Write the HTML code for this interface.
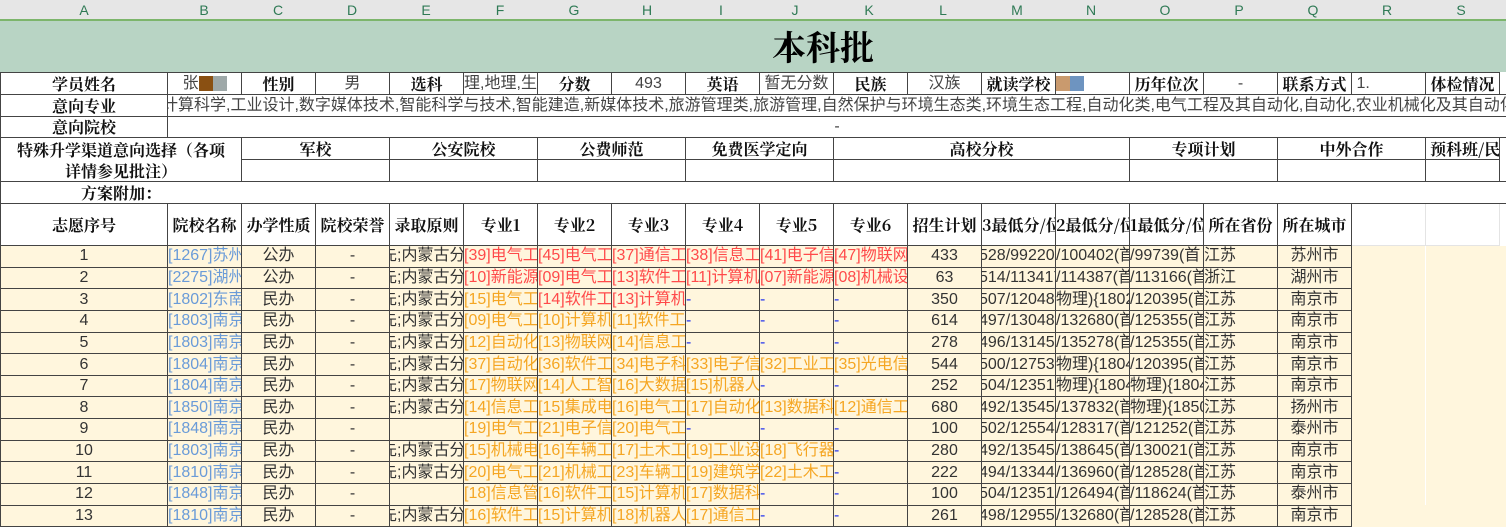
<!DOCTYPE html>
<html><head><meta charset="utf-8"><style>
*{margin:0;padding:0;box-sizing:border-box}
body{width:1506px;height:518px;overflow:hidden;background:#fff;font-family:"Liberation Sans","Noto Sans CJK SC",sans-serif;position:relative}
#hdr{position:absolute;left:0;top:0;width:1506px;height:21px;background:#e6e6e6;border-bottom:2px solid #7cb56b}
#hdr span{position:absolute;top:2px;width:74px;text-align:center;font-size:14px;color:#2f7a55}
#title{position:absolute;left:0;top:21px;width:1506px;height:51px;background:#b8d4c4;text-align:center;font:bold 34px/50px "Noto Serif CJK SC","Noto Sans CJK SC",serif;color:#000;padding-left:140px}
table{position:absolute;left:0;top:72px;border-collapse:collapse;table-layout:fixed;width:1506px}
td{border:1px solid #444;overflow:hidden;white-space:nowrap;text-align:center;font-size:16px;color:#444;padding:0;line-height:18px}
.b{font-family:"Noto Serif CJK SC","Noto Sans CJK SC",serif;font-weight:bold;color:#111;font-size:16px}
.l{text-align:left}
.nb{border:none}
.d td{background:#fff6dd;height:21.65px;color:#333}
.d td.nb{border:none}
.d td.k{color:#6a9bd8;text-align:left}
.d td.r{color:#ff4a4a;text-align:left}
.d td.o{color:#f5a623;text-align:left}
.d td.q{color:#2233ee;text-align:left}
.e span{margin-left:-9px}
.m span{margin-left:-3px}
.m{text-align:left}
</style></head><body>
<div id="hdr">
<span style="left:47px">A</span><span style="left:167px">B</span><span style="left:241px">C</span><span style="left:315px">D</span><span style="left:389px">E</span><span style="left:463px">F</span><span style="left:537px">G</span><span style="left:610px">H</span><span style="left:684px">I</span><span style="left:758px">J</span><span style="left:832px">K</span><span style="left:906px">L</span><span style="left:980px">M</span><span style="left:1054px">N</span><span style="left:1128px">O</span><span style="left:1202px">P</span><span style="left:1276px">Q</span><span style="left:1350px">R</span><span style="left:1424px">S</span>
</div>
<div id="title">本科批</div>
<table>
<colgroup><col style="width:167px"><col span="18" style="width:74px"><col style="width:7px"></colgroup>
<tr style="height:22px"><td class="b">学员姓名</td><td>张<span style="display:inline-block;width:14px;height:15px;background:#8a5012;vertical-align:middle"></span><span style="display:inline-block;width:14px;height:15px;background:#9ea8a8;vertical-align:middle"></span></td><td class="b">性别</td><td>男</td><td class="b">选科</td><td>理,地理,生</td><td class="b">分数</td><td>493</td><td class="b">英语</td><td>暂无分数</td><td class="b">民族</td><td>汉族</td><td class="b">就读学校</td><td class="l"><span style="display:inline-block;width:14px;height:15px;background:#c99a6e;vertical-align:middle"></span><span style="display:inline-block;width:14px;height:15px;background:#6e94c0;vertical-align:middle"></span></td><td class="b">历年位次</td><td>-</td><td class="b">联系方式</td><td class="l">&nbsp;1.</td><td class="b">体检情况</td><td class="nb"></td></tr>
<tr style="height:22px"><td class="b">意向专业</td><td colspan="19" class="l" style="text-indent:-6px">计算科学,工业设计,数字媒体技术,智能科学与技术,智能建造,新媒体技术,旅游管理类,旅游管理,自然保护与环境生态类,环境生态工程,自动化类,电气工程及其自动化,自动化,农业机械化及其自动化</td></tr>
<tr style="height:21px"><td class="b">意向院校</td><td colspan="19">-</td></tr>
<tr style="height:22px"><td colspan="2" rowspan="2" class="b" style="line-height:21px">特殊升学渠道意向选择（各项<br>详情参见批注）</td><td colspan="2" class="b">军校</td><td colspan="2" class="b">公安院校</td><td colspan="2" class="b">公费师范</td><td colspan="2" class="b">免费医学定向</td><td colspan="4" class="b">高校分校</td><td colspan="2" class="b">专项计划</td><td colspan="2" class="b">中外合作</td><td class="b l">&nbsp;预科班/民</td><td class="nb"></td></tr>
<tr style="height:22px"><td colspan="2"></td><td colspan="2"></td><td colspan="2"></td><td colspan="2"></td><td colspan="4"></td><td colspan="2"></td><td colspan="2"></td><td></td><td class="nb"></td></tr>
<tr style="height:22px"><td colspan="2" class="b" style="border-right:none;text-align:left;padding-left:80px">方案附加：</td><td colspan="18" style="border-left:none"></td></tr>
<tr style="height:42px"><td class="b">志愿序号</td><td class="b">院校名称</td><td class="b">办学性质</td><td class="b">院校荣誉</td><td class="b">录取原则</td><td class="b">专业1</td><td class="b">专业2</td><td class="b">专业3</td><td class="b">专业4</td><td class="b">专业5</td><td class="b">专业6</td><td class="b">招生计划</td><td class="b m">3最低分/位</td><td class="b m">2最低分/位</td><td class="b m">1最低分/位</td><td class="b">所在省份</td><td class="b">所在城市</td><td style="border-color:#e4e4e4"></td><td style="border-color:#e4e4e4"></td><td class="nb"></td></tr>
</table>
<table style="top:245px" class="d">
<colgroup><col style="width:167px"><col span="18" style="width:74px"><col style="width:7px"></colgroup>
<tr><td>1</td><td class="k">[1267]苏州</td><td>公办</td><td>-</td><td class="e l"><span>先;内蒙古分</span></td><td class="r">[39]电气工</td><td class="r">[45]电气工</td><td class="r">[37]通信工</td><td class="r">[38]信息工</td><td class="r">[41]电子信</td><td class="r">[47]物联网</td><td>433</td><td class="m"><span>528/99220</span></td><td class="l">/100402(首</td><td class="l">/99739(首</td><td class="l">江苏</td><td>苏州市</td><td class="nb"></td><td class="nb"></td><td class="nb"></td></tr>
<tr><td>2</td><td class="k">[2275]湖州</td><td>公办</td><td>-</td><td class="e l"><span>先;内蒙古分</span></td><td class="r">[10]新能源</td><td class="r">[09]电气工</td><td class="r">[13]软件工</td><td class="r">[11]计算机</td><td class="r">[07]新能源</td><td class="r">[08]机械设</td><td>63</td><td class="m"><span>514/113417</span></td><td class="l">/114387(首</td><td class="l">/113166(首</td><td class="l">浙江</td><td>湖州市</td><td class="nb"></td><td class="nb"></td><td class="nb"></td></tr>
<tr><td>3</td><td class="k">[1802]东南</td><td>民办</td><td>-</td><td class="e l"><span>先;内蒙古分</span></td><td class="o">[15]电气工</td><td class="r">[14]软件工</td><td class="r">[13]计算机</td><td class="q">-</td><td class="q">-</td><td class="q">-</td><td>350</td><td class="m"><span>507/120486</span></td><td class="l">物理){1802</td><td class="l">/120395(首</td><td class="l">江苏</td><td>南京市</td><td class="nb"></td><td class="nb"></td><td class="nb"></td></tr>
<tr><td>4</td><td class="k">[1803]南京</td><td>民办</td><td>-</td><td class="e l"><span>先;内蒙古分</span></td><td class="o">[09]电气工</td><td class="o">[10]计算机</td><td class="o">[11]软件工</td><td class="q">-</td><td class="q">-</td><td class="q">-</td><td>614</td><td class="m"><span>497/130487</span></td><td class="l">/132680(首</td><td class="l">/125355(首</td><td class="l">江苏</td><td>南京市</td><td class="nb"></td><td class="nb"></td><td class="nb"></td></tr>
<tr><td>5</td><td class="k">[1803]南京</td><td>民办</td><td>-</td><td class="e l"><span>先;内蒙古分</span></td><td class="o">[12]自动化</td><td class="o">[13]物联网</td><td class="o">[14]信息工</td><td class="q">-</td><td class="q">-</td><td class="q">-</td><td>278</td><td class="m"><span>496/131457</span></td><td class="l">/135278(首</td><td class="l">/125355(首</td><td class="l">江苏</td><td>南京市</td><td class="nb"></td><td class="nb"></td><td class="nb"></td></tr>
<tr><td>6</td><td class="k">[1804]南京</td><td>民办</td><td>-</td><td class="e l"><span>先;内蒙古分</span></td><td class="o">[37]自动化</td><td class="o">[36]软件工</td><td class="o">[34]电子科</td><td class="o">[33]电子信</td><td class="o">[32]工业工</td><td class="o">[35]光电信</td><td>544</td><td class="m"><span>500/127538</span></td><td class="l">物理){1804</td><td class="l">/120395(首</td><td class="l">江苏</td><td>南京市</td><td class="nb"></td><td class="nb"></td><td class="nb"></td></tr>
<tr><td>7</td><td class="k">[1804]南京</td><td>民办</td><td>-</td><td class="e l"><span>先;内蒙古分</span></td><td class="o">[17]物联网</td><td class="o">[14]人工智</td><td class="o">[16]大数据</td><td class="o">[15]机器人</td><td class="q">-</td><td class="q">-</td><td>252</td><td class="m"><span>504/123513</span></td><td class="l">物理){1804</td><td class="l">物理){1804</td><td class="l">江苏</td><td>南京市</td><td class="nb"></td><td class="nb"></td><td class="nb"></td></tr>
<tr><td>8</td><td class="k">[1850]南京</td><td>民办</td><td>-</td><td class="e l"><span>先;内蒙古分</span></td><td class="o">[14]信息工</td><td class="o">[15]集成电</td><td class="o">[16]电气工</td><td class="o">[17]自动化</td><td class="o">[13]数据科</td><td class="o">[12]通信工</td><td>680</td><td class="m"><span>492/135454</span></td><td class="l">/137832(首</td><td class="l">物理){1850</td><td class="l">江苏</td><td>扬州市</td><td class="nb"></td><td class="nb"></td><td class="nb"></td></tr>
<tr><td>9</td><td class="k">[1848]南京</td><td>民办</td><td>-</td><td></td><td class="o">[19]电气工</td><td class="o">[21]电子信</td><td class="o">[20]电气工</td><td class="q">-</td><td class="q">-</td><td class="q">-</td><td>100</td><td class="m"><span>502/125547</span></td><td class="l">/128317(首</td><td class="l">/121252(首</td><td class="l">江苏</td><td>泰州市</td><td class="nb"></td><td class="nb"></td><td class="nb"></td></tr>
<tr><td>10</td><td class="k">[1803]南京</td><td>民办</td><td>-</td><td class="e l"><span>先;内蒙古分</span></td><td class="o">[15]机械电</td><td class="o">[16]车辆工</td><td class="o">[17]土木工</td><td class="o">[19]工业设</td><td class="o">[18]飞行器</td><td class="q">-</td><td>280</td><td class="m"><span>492/135454</span></td><td class="l">/138645(首</td><td class="l">/130021(首</td><td class="l">江苏</td><td>南京市</td><td class="nb"></td><td class="nb"></td><td class="nb"></td></tr>
<tr><td>11</td><td class="k">[1810]南京</td><td>民办</td><td>-</td><td class="e l"><span>先;内蒙古分</span></td><td class="o">[20]电气工</td><td class="o">[21]机械工</td><td class="o">[23]车辆工</td><td class="o">[19]建筑学</td><td class="o">[22]土木工</td><td class="q">-</td><td>222</td><td class="m"><span>494/133447</span></td><td class="l">/136960(首</td><td class="l">/128528(首</td><td class="l">江苏</td><td>南京市</td><td class="nb"></td><td class="nb"></td><td class="nb"></td></tr>
<tr><td>12</td><td class="k">[1848]南京</td><td>民办</td><td>-</td><td></td><td class="o">[18]信息管</td><td class="o">[16]软件工</td><td class="o">[15]计算机</td><td class="o">[17]数据科</td><td class="q">-</td><td class="q">-</td><td>100</td><td class="m"><span>504/123513</span></td><td class="l">/126494(首</td><td class="l">/118624(首</td><td class="l">江苏</td><td>泰州市</td><td class="nb"></td><td class="nb"></td><td class="nb"></td></tr>
<tr><td>13</td><td class="k">[1810]南京</td><td>民办</td><td>-</td><td class="e l"><span>先;内蒙古分</span></td><td class="o">[16]软件工</td><td class="o">[15]计算机</td><td class="o">[18]机器人</td><td class="o">[17]通信工</td><td class="q">-</td><td class="q">-</td><td>261</td><td class="m"><span>498/129557</span></td><td class="l">/132680(首</td><td class="l">/128528(首</td><td class="l">江苏</td><td>南京市</td><td class="nb"></td><td class="nb"></td><td class="nb"></td></tr>
</table>
</body></html>
